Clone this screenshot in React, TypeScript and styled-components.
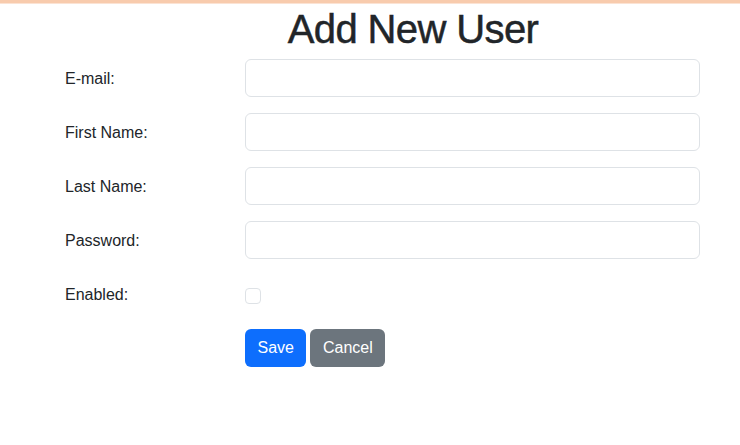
import React from "react";
import styled, { createGlobalStyle } from "styled-components";

const Global = createGlobalStyle`
  html, body { margin: 0; padding: 0; background: #fff; }
  body { font-family: "Liberation Sans", Arial, sans-serif; color: #212529; }
  * { box-sizing: border-box; }
`;

const TopBar = styled.div`
  height: 4px;
  background: #f8cbad;
  border-bottom: 1px solid #fbe3d4;
`;

const Page = styled.div`
  padding: 0 40px 0 65px;
`;

const Title = styled.h1`
  margin: 0 0 0 61px;
  height: 55px;
  font-size: 40px;
  font-weight: 500;
  letter-spacing: -0.6px;
  line-height: 48px;
  text-align: center;
  padding-top: 1px;
  -webkit-text-stroke: 0.5px #212529;
`;

const Form = styled.form`
  display: flex;
  flex-direction: column;
  gap: 16px;
`;

const Row = styled.div`
  display: grid;
  grid-template-columns: 180px 1fr;
  align-items: center;
  height: 38px;
`;

const Label = styled.label`
  font-size: 16px;
  line-height: 24px;
  padding-top: 1px;
`;

const Input = styled.input`
  height: 38px;
  width: 100%;
  border: 1px solid #dee2e6;
  border-radius: 6px;
  font-size: 16px;
  padding: 6px 12px;
  outline: none;
`;

const Check = styled.span`
  display: block;
  width: 16px;
  height: 16px;
  border: 1px solid #dee2e6;
  border-radius: 4px;
  margin-top: 4px;
`;

const Actions = styled.div`
  display: flex;
  gap: 4px;
  grid-column: 2;
`;

const Button = styled.button<{ $variant: "primary" | "secondary" }>`
  height: 38px;
  padding: 6px 12.5px;
  border: none;
  border-radius: 6px;
  font-family: "Liberation Sans", Arial, sans-serif;
  font-size: 16px;
  line-height: 24px;
  color: #fff;
  background: ${(p) => (p.$variant === "primary" ? "#0d6efd" : "#6c757d")};
`;

const fields = ["E-mail:", "First Name:", "Last Name:", "Password:"];

export default function App() {
  return (
    <>
      <Global />
      <TopBar />
      <Page>
        <Title>Add New User</Title>
        <Form onSubmit={(e) => e.preventDefault()}>
          {fields.map((f) => (
            <Row key={f}>
              <Label>{f}</Label>
              <Input type={f === "Password:" ? "password" : "text"} />
            </Row>
          ))}
          <Row>
            <Label>Enabled:</Label>
            <Check />
          </Row>
          <Row>
            <Actions>
              <Button type="submit" $variant="primary">Save</Button>
              <Button type="button" $variant="secondary">Cancel</Button>
            </Actions>
          </Row>
        </Form>
      </Page>
    </>
  );
}
